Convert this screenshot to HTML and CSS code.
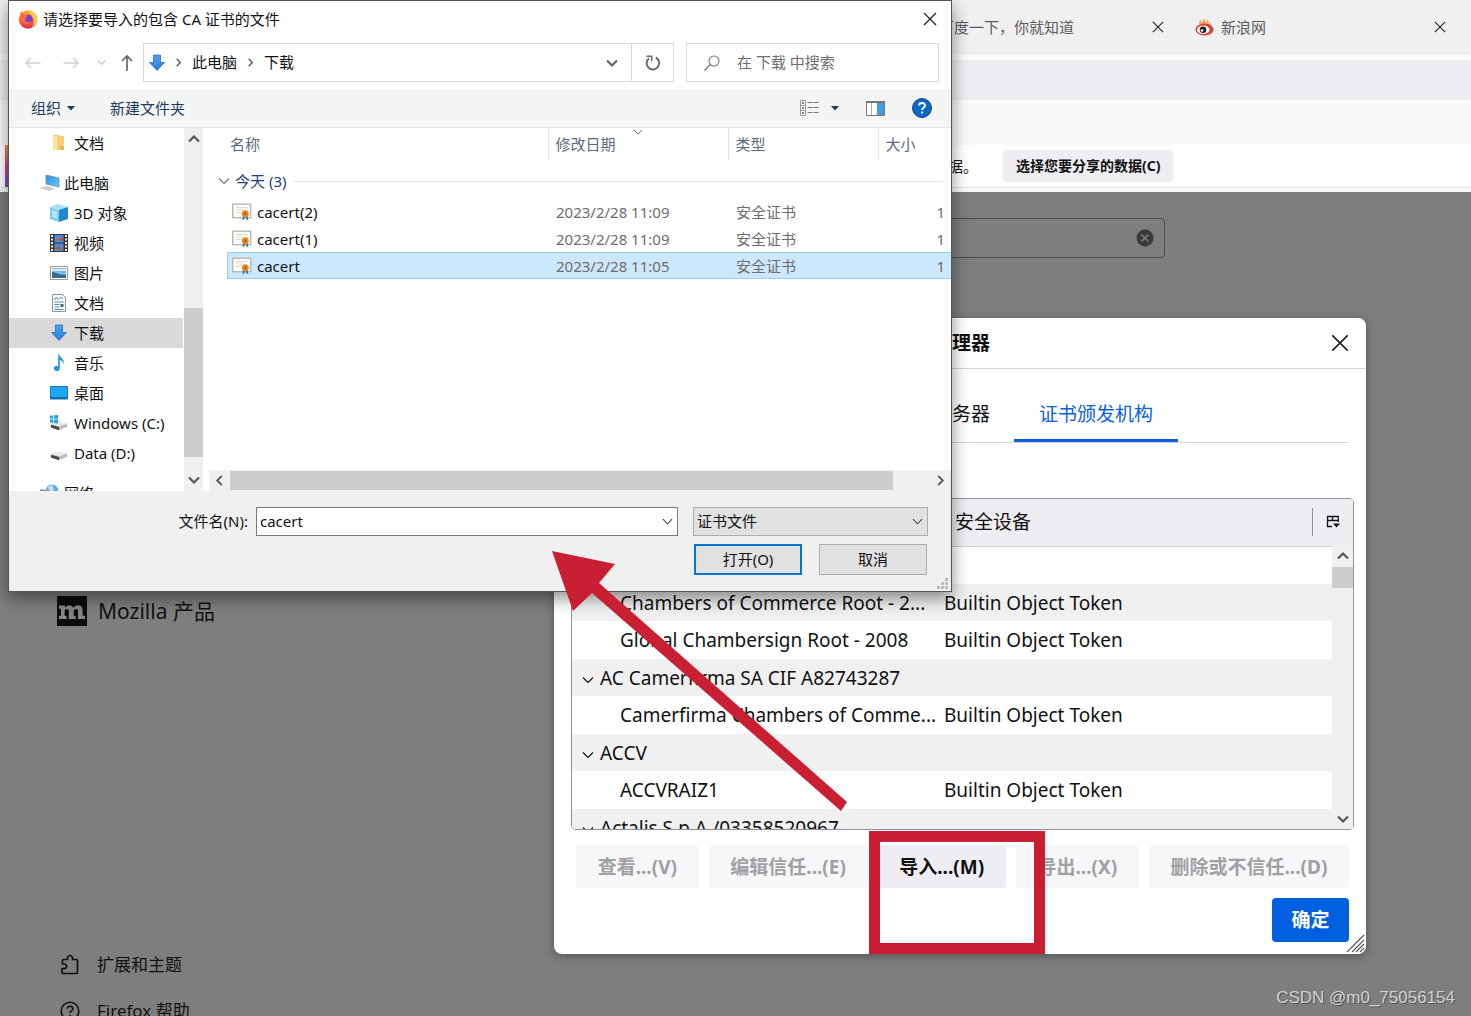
FILE: index.html
```html
<!DOCTYPE html>
<html lang="zh-CN">
<head>
<meta charset="utf-8">
<title>证书管理器</title>
<link rel="stylesheet" href="styles.css">
</head>
<body>
<svg class="sprite" aria-hidden="true">
  <defs>
    <linearGradient id="g-arrow" x1="0" y1="0" x2="0" y2="1"><stop offset="0" stop-color="#4aa3ee"/><stop offset="1" stop-color="#2b7fd6"/></linearGradient>
    <linearGradient id="g-fox" x1="0" y1="0" x2="0" y2="1"><stop offset="0" stop-color="#ffb02e"/><stop offset=".45" stop-color="#ff7139"/><stop offset="1" stop-color="#e02950"/></linearGradient>
    <linearGradient id="g-screen" x1="0" y1="0" x2="1" y2="1"><stop offset="0" stop-color="#2b8fe0"/><stop offset="1" stop-color="#6cc7fb"/></linearGradient>
  </defs>
  <symbol id="close" viewBox="0 0 14 14"><path d="M1 1l12 12M13 1L1 13" fill="none" stroke="currentColor" stroke-width="1.3"/></symbol>
  <symbol id="down" viewBox="0 0 12 12"><path d="M1 3.5l5 5 5-5" fill="none" stroke="currentColor" stroke-width="1.2"/></symbol>
  <symbol id="down-bold" viewBox="0 0 12 12"><path d="M1 3.5l5 5 5-5" fill="none" stroke="currentColor" stroke-width="2.2"/></symbol>
  <symbol id="up-bold" viewBox="0 0 12 12"><path d="M1 8.5l5-5 5 5" fill="none" stroke="currentColor" stroke-width="2.2"/></symbol>
  <symbol id="left-bold" viewBox="0 0 12 12"><path d="M8.500 1l-5 5 5 5" fill="none" stroke="currentColor" stroke-width="2"/></symbol>
  <symbol id="right-bold" viewBox="0 0 12 12"><path d="M3.500 1l5 5-5 5" fill="none" stroke="currentColor" stroke-width="2"/></symbol>
  <symbol id="caret" viewBox="0 0 8 5"><path d="M0 0h8L4 4.500z" fill="currentColor"/></symbol>
  <symbol id="download" viewBox="0 0 18 18"><path d="M5.500 1h7v7.500h4L9 16.500 1.500 8.500h4z" fill="url(#g-arrow)" stroke="#2a6cb4" stroke-width=".8"/></symbol>
  <symbol id="cert" viewBox="0 0 20 18"><rect x=".7" y="1.200" width="18" height="13.500" fill="#fcfbf7" stroke="#b9b7b1" stroke-width="1.400"/><path d="M4 4.500h11M5 7h6M4 9.500h5" stroke="#ddd9cd" fill="none"/><path d="M11 12l-.5 5.500 2-1.500.7-3zM15.500 12l.8 5.500-2.200-1.500-.6-3z" fill="#2f76b5"/><circle cx="13.300" cy="10.800" r="3.500" fill="#e58a1c"/><circle cx="13.300" cy="10.800" r="1.200" fill="#a45c0c"/></symbol>
  <symbol id="drive" viewBox="0 0 20 18"><path d="M1 10.500l8-3 10 2.200v3.500L10 17 1 14z" fill="#b9bdc0"/><path d="M1 10.500l8-3 10 2.200-9 3.300z" fill="#e9ebec"/><path d="M1 11l9 2.500V17l-9-3z" fill="#45484a"/></symbol>
</svg>

<div class="desktop">
  <div class="browser">
    <div class="tabstrip">
      <div class="tab"><span class="favicon"></span><span class="tab-title">百度一下，你就知道</span>
        <button class="icon-button" aria-label="关闭标签页"><svg width="12" height="12"><use href="#close"/></svg></button></div>
      <div class="tab"><span class="favicon"><svg width="19" height="18" viewBox="0 0 19 18"><path d="M4 6c0-2 1-3 1-5 1 2 1.500 2.500 1.500 4C7.500 4 8.500 2 8.500.5 10 2 10.500 3 10 5c1.500-1 2.500-2.500 2.500-4C14 3 14 4.500 13 6c1.500-.5 2-1 3-2-.2 2-1 3-2 4z" fill="#f2a65a"/><ellipse cx="9.500" cy="11.500" rx="9" ry="6" fill="#df3a34"/><ellipse cx="8.300" cy="11.700" rx="6.300" ry="4.300" fill="#fff"/><circle cx="8" cy="11.800" r="3.300" fill="#222"/><circle cx="7" cy="12.500" r="1.300" fill="#fff"/></svg></span><span class="tab-title">新浪网</span>
        <button class="icon-button" aria-label="关闭标签页"><svg width="12" height="12"><use href="#close"/></svg></button></div>
    </div>
    <div class="urlbar"></div>
    <div class="bookmarks"></div>
    <div class="notice">
      <span class="notice-logo"></span>
      <span class="notice-text">数据。</span>
      <button class="notice-button">选择您要分享的数据(C)</button>
    </div>
    <main class="page">
      <div class="search"><input class="search-input" type="text" aria-label="搜索设置">
        <button class="icon-button" aria-label="清除"><svg width="18" height="18" viewBox="0 0 18 18"><circle cx="9" cy="9" r="8.500" fill="#3a3a3b"/><path d="M5.500 5.500l7 7M12.500 5.500l-7 7" stroke="#7e7e7e" stroke-width="1.600"/></svg></button></div>
      <a class="mozilla" href="#"><svg width="30" height="30" viewBox="0 0 30 30"><rect width="30" height="30" fill="#0b0b0e"/><path d="M2 9.500h6v2.300c1-1.700 2.500-2.600 4.300-2.600 2 0 3.400 1 4 2.800 1-1.800 2.600-2.800 4.700-2.800 3 0 4.600 1.800 4.600 5v5.600H28V23h-7v-7.600c0-1.700-.6-2.500-1.900-2.500-1.500 0-2.400 1.200-2.400 3v3.900h2V23h-6.900v-7.600c0-1.700-.6-2.500-1.900-2.500-1.500 0-2.300 1.200-2.300 3v3.900h2V23H2v-3.200h2v-7H2z" fill="#858585"/></svg>Mozilla 产品</a>
      <nav class="links">
        <a href="#"><svg width="20" height="22" viewBox="0 0 20 22"><path d="M3 19.500h13.500a1 1 0 0 0 1-1V6.500a1 1 0 0 0-1-1h-4V4a2.500 2.500 0 0 0-5 0v1.500h-4a1 1 0 0 0-1 1V10h1.700a2.300 2.300 0 0 1 0 4.600H2v4a1 1 0 0 0 1 .9z" fill="none" stroke="currentColor" stroke-width="1.700"/></svg>扩展和主题</a>
        <a href="#"><svg width="20" height="20" viewBox="0 0 20 20"><circle cx="10" cy="10" r="8.800" fill="none" stroke="currentColor" stroke-width="1.600"/><path d="M7.300 7.700c.2-3.300 5.600-3.200 5.500.1 0 2-2.700 2.100-2.700 4.200M10 13.700v1.600" fill="none" stroke="currentColor" stroke-width="1.700"/></svg>Firefox 帮助</a>
      </nav>
    </main>
  </div>

  <section class="manager" aria-label="证书管理器">
    <header class="manager-head"><h1>证书管理器</h1>
      <button class="icon-button" aria-label="关闭"><svg width="18" height="18"><use href="#close"/></svg></button></header>
    <div class="manager-tabs">
      <button class="mtab">服务器</button>
      <button class="mtab active">证书颁发机构</button>
    </div>
    <div class="tree">
      <table>
        <colgroup><col class="c-name"><col><col class="c-pick"></colgroup>
        <thead><tr><th></th><th>安全设备</th><th><button class="picker" aria-label="选择列"><svg width="14" height="14" viewBox="0 0 14 14"><path d="M1 1.500h11.500M1 5.500h11.500M1.500 1v10.500H6M6.500 1.500v4M12.300 1v6" fill="none" stroke="#15141a" stroke-width="1.300"/><path d="M7 8.500h7l-3.500 4z" fill="#15141a"/></svg></button></th></tr></thead>
        <tbody>
          <tr><td></td><td colspan="2"></td></tr>
          <tr><td class="child">Chambers of Commerce Root - 2...</td><td colspan="2">Builtin Object Token</td></tr>
          <tr><td class="child">Global Chambersign Root - 2008</td><td colspan="2">Builtin Object Token</td></tr>
          <tr><td colspan="3" class="parent"><svg width="12" height="12"><use href="#down"/></svg>AC Camerfirma SA CIF A82743287</td></tr>
          <tr><td class="child">Camerfirma Chambers of Comme...</td><td colspan="2">Builtin Object Token</td></tr>
          <tr><td colspan="3" class="parent"><svg width="12" height="12"><use href="#down"/></svg>ACCV</td></tr>
          <tr><td class="child">ACCVRAIZ1</td><td colspan="2">Builtin Object Token</td></tr>
          <tr><td colspan="3" class="parent"><svg width="12" height="12"><use href="#down"/></svg>Actalis S.p.A./03358520967</td></tr>
        </tbody>
      </table>
      <div class="tree-scroll"><svg width="12" height="12"><use href="#up-bold"/></svg><span class="thumb"></span><svg class="end" width="12" height="12"><use href="#down-bold"/></svg></div>
    </div>
    <div class="actions">
      <button disabled>查看...(V)</button>
      <button disabled>编辑信任...(E)</button>
      <button>导入...(M)</button>
      <button disabled>导出...(X)</button>
      <button disabled>删除或不信任...(D)</button>
    </div>
    <div class="confirm"><button>确定</button></div>
    <svg class="resizer" width="20" height="20" viewBox="0 0 20 20"><path d="M1 18L18 1M6 18L18 6M10 18l8-8M14 18l4-4" stroke="#555" stroke-width="1.100"/></svg>
  </section>

  <section class="filedlg" aria-label="打开文件">
    <header class="titlebar">
      <svg width="20" height="20" viewBox="0 0 20 20"><circle cx="10" cy="10.500" r="9.200" fill="url(#g-fox)"/><path d="M11 1c3 1 8 4 8.200 10-1 4-3 6-5 7 3-5 2-9-1-12-1.500-1.500-2.500-3-2.200-5z" fill="#ffcb3d"/><circle cx="10" cy="10.300" r="4.700" fill="#7a43c6"/><path d="M3 2l3 4 4 .5-2 2-1 3c2 2 5 2 7 0-1 4-7 5-10 1-2-3-2-6-1-10.500z" fill="#ff6a36"/></svg>
      <h2>请选择要导入的包含 CA 证书的文件</h2>
      <button class="icon-button" aria-label="关闭"><svg width="14" height="14"><use href="#close"/></svg></button>
    </header>
    <div class="navrow">
      <div class="navbtns">
        <button class="icon-button faint" aria-label="后退"><svg width="16" height="12" viewBox="0 0 16 12"><path d="M6 1L1 6l5 5M1 6h14.500" fill="none" stroke="currentColor" stroke-width="1.500"/></svg></button>
        <button class="icon-button faint" aria-label="前进"><svg width="16" height="12" viewBox="0 0 16 12"><path d="M10 1l5 5-5 5M15 6H.5" fill="none" stroke="currentColor" stroke-width="1.500"/></svg></button>
        <button class="icon-button faint recent" aria-label="最近位置"><svg width="9" height="9"><use href="#down-bold"/></svg></button>
        <button class="icon-button" aria-label="上移"><svg width="12" height="16" viewBox="0 0 12 16"><path d="M1 6l5-5 5 5M6 1v15" fill="none" stroke="#666" stroke-width="1.700"/></svg></button>
      </div>
      <div class="address">
        <svg width="18" height="18"><use href="#download"/></svg>
        <svg width="9" height="9"><use href="#right-bold"/></svg><span>此电脑</span>
        <svg width="9" height="9"><use href="#right-bold"/></svg><span>下载</span>
        <button class="icon-button drop" aria-label="历史"><svg width="12" height="12"><use href="#down-bold"/></svg></button>
        <button class="refresh" aria-label="刷新"><svg width="16" height="16" viewBox="0 0 16 16"><path d="M10.800 2.500A6.300 6.300 0 1 1 4 3.200" fill="none" stroke="#6d6d6d" stroke-width="2"/><path d="M1.500 1.200h5.200v5" fill="none" stroke="#6d6d6d" stroke-width="1.600"/></svg></button>
      </div>
      <label class="find"><svg width="16" height="16" viewBox="0 0 16 16"><circle cx="10" cy="6" r="5" fill="none" stroke="#777" stroke-width="1.100"/><path d="M6.300 9.500L.5 15.500" stroke="#777" stroke-width="1.200"/></svg><input type="text" placeholder="在 下载 中搜索" aria-label="搜索"></label>
    </div>
    <div class="toolbar">
      <button>组织<svg width="8" height="5"><use href="#caret"/></svg></button>
      <button>新建文件夹</button>
      <button class="view" aria-label="更改视图"><svg width="19" height="16" viewBox="0 0 19 16"><path d="M.5.500h5v15h-5zM.5 5.500h5M.5 10.500h5" fill="#fff" stroke="#999"/><path d="M2 3h2M2 8h2M2 13h2" stroke="#744" stroke-width="1.600"/><path d="M7.500 2.500h11M7.500 7.500h11M7.500 12.500h11" stroke="#777" stroke-dasharray="5 1"/></svg><svg width="8" height="5"><use href="#caret"/></svg></button>
      <button aria-label="预览窗格"><svg width="19" height="15" viewBox="0 0 19 15"><path d="M.5.500h18v14H.500z" fill="#fff" stroke="#777"/><path d="M0 1h19" stroke="#777" stroke-width="2"/><path d="M5.500 2v12" stroke="#aaa"/><path d="M11 2h7v12h-7z" fill="#429be8"/></svg></button>
      <button aria-label="帮助"><svg width="20" height="20" viewBox="0 0 20 20"><circle cx="10" cy="10" r="9.500" fill="#0b68c6" stroke="#17457c"/><path d="M7 7.500c.2-3.500 6.200-3.400 6 .2-.1 2-2.900 2.200-2.900 4.300M10.100 13.500v2" fill="none" stroke="#fff" stroke-width="1.900"/></svg></button>
    </div>
    <div class="panes">
      <nav class="side">
        <a href="#" class="gap"><svg width="18" height="18" viewBox="0 0 18 18"><path d="M3 1h6l1 1h4v14H3z" fill="#f5cf71"/><path d="M3 1l4 2v14l-4-1z" fill="#fbe6a9"/><path d="M10 12h4v4h-4z" fill="#e9b949"/></svg>文档</a>
        <a href="#" class="top"><svg width="20" height="18" viewBox="0 0 20 18"><path d="M6 1l13 3v9L6 10z" fill="url(#g-screen)" stroke="#6f8ea8" stroke-width=".8"/><path d="M0 14l7-2 8 2.500-6 2.500z" fill="#c9ccd0"/></svg>此电脑</a>
        <a href="#"><svg width="18" height="18" viewBox="0 0 18 18"><path d="M0 3l8-3 10 3-8 3z" fill="#a6e1f7"/><path d="M0 3l9 3v12l-9-3z" fill="#7ccdf0"/><path d="M9 6l9-3v12l-9 3z" fill="#1f86cf"/><path d="M2 6l5 1.500v7L2 13z" fill="#b4e6f8"/></svg>3D 对象</a>
        <a href="#"><svg width="18" height="18" viewBox="0 0 18 18"><path d="M0 0h18v18H0z" fill="#333"/><path d="M4.500 1h9v7.500h-9zM4.500 9.500h9V17h-9z" fill="#4a8ddd"/><path d="M5 6l8-3v4zM5 15l4-3 4 4z" fill="#c0512f"/><path d="M2 1v17M16 1v17" stroke="#eee" stroke-width="2" stroke-dasharray="2 1.500"/></svg>视频</a>
        <a href="#"><svg width="18" height="18" viewBox="0 0 18 18"><path d="M.5 2.500h17v13H.500z" fill="#fff" stroke="#999"/><path d="M2 4h14v10H2z" fill="#7db9e8"/><path d="M2 8c4 0 6 3 14 3v3H2z" fill="#35688c"/><path d="M2 5h14v2H2z" fill="#d6ecfa"/></svg>图片</a>
        <a href="#"><svg width="18" height="18" viewBox="0 0 18 18"><path d="M2.500.500h10l3 3v14h-13z" fill="#fff" stroke="#8b9499"/><path d="M4.500 6l2-3 2 3M9 4h4M4.500 8h9M4.500 10.500h5M4.500 13h5M4.500 15.500h9" stroke="#3d95b8" fill="none"/><path d="M10.500 10h3v3h-3z" fill="#4a6577"/></svg>文档</a>
        <a href="#" class="current"><svg width="18" height="18"><use href="#download"/></svg>下载</a>
        <a href="#"><svg width="18" height="18" viewBox="0 0 18 18"><path d="M9 0c.5 4 6 4 4.500 10-.5-2.500-2-3.500-3.700-4v8.500a3 2.600 0 1 1-1.600-2.300V0z" fill="#1b9be0"/></svg>音乐</a>
        <a href="#"><svg width="18" height="18" viewBox="0 0 18 18"><path d="M.5 2.500h17v12.500H.500z" fill="#1fa5f4" stroke="#1578b8"/><path d="M1 14h16" stroke="#0b5f9e" stroke-width="1.500"/></svg>桌面</a>
        <a href="#"><svg width="20" height="18" viewBox="0 0 20 18"><use href="#drive"/><path d="M0 1l3.500-.5v3.700H0zM4.500.400L9 0v4.200H4.500zM0 5.200h3.500V9L0 8.500zM4.500 5.200H9v4.300l-4.500-.4z" fill="#27a4e0"/></svg>Windows (C:)</a>
        <a href="#" class="gap"><svg width="20" height="18"><use href="#drive"/></svg>Data (D:)</a>
        <a href="#" class="top"><svg width="20" height="18" viewBox="0 0 20 18"><circle cx="12" cy="7" r="6.500" fill="#62aede"/><path d="M8 3l4-2 2 5-4 2z" fill="#c4e4f6"/><path d="M0 5l6 1v8H0z" fill="#6d9cbb"/></svg>网络</a>
      </nav>
      <div class="vscroll"><svg width="12" height="12"><use href="#up-bold"/></svg><span class="thumb"></span><svg width="12" height="12"><use href="#down-bold"/></svg></div>
      <div class="files">
        <svg class="sort" width="10" height="10"><use href="#down"/></svg>
        <table>
          <colgroup><col class="f-pad"><col><col class="f-date"><col class="f-type"><col class="f-size"></colgroup>
          <thead><tr><th></th><th>名称</th><th>修改日期</th><th>类型</th><th>大小</th></tr></thead>
          <tbody>
            <tr class="group"><td colspan="5"><div><svg width="12" height="12"><use href="#down"/></svg>今天 (3)<i></i></div></td></tr>
            <tr><td></td><td class="name"><svg width="20" height="18"><use href="#cert"/></svg>cacert(2)</td><td>2023/2/28 11:09</td><td>安全证书</td><td class="num">1</td></tr>
            <tr><td></td><td class="name"><svg width="20" height="18"><use href="#cert"/></svg>cacert(1)</td><td>2023/2/28 11:09</td><td>安全证书</td><td class="num">1</td></tr>
            <tr class="selected"><td></td><td class="name"><svg width="20" height="18"><use href="#cert"/></svg>cacert</td><td>2023/2/28 11:05</td><td>安全证书</td><td class="num">1</td></tr>
          </tbody>
        </table>
        <div class="hscroll"><svg width="11" height="11"><use href="#left-bold"/></svg><span class="thumb"></span><svg width="11" height="11"><use href="#right-bold"/></svg></div>
      </div>
    </div>
    <footer class="dlg-foot">
      <label for="fname">文件名(N):</label>
      <div class="combo"><input id="fname" type="text" value="cacert"><svg width="11" height="11"><use href="#down"/></svg></div>
      <div class="combo type"><select aria-label="文件类型"><option>证书文件</option></select><svg width="11" height="11"><use href="#down"/></svg></div>
      <div class="dlg-buttons"><button class="default">打开(O)</button><button>取消</button></div>
      <svg class="grip" width="12" height="12" viewBox="0 0 12 12"><path d="M8 0h3v3H8zM8 4h3v3H8zM8 8h3v3H8zM4 4h3v3H4zM4 8h3v3H4zM0 8h3v3H0z" fill="#bbb"/></svg>
    </footer>
  </section>

  <svg class="arrow" width="296" height="262" viewBox="0 0 296 262"><path d="M0 0l63 13-16 19 248 219-6 9L40 42 21 60z" fill="#c81f33"/></svg>
  <div class="highlight"></div>
  <div class="watermark">CSDN @m0_75056154</div>
</div>
</body>
</html>
```
FILE: styles.css
```css
* { box-sizing: border-box; }
body, h1, h2 { margin: 0; }
body, button, input, select {
  font-family: "Noto Sans", "Noto Sans CJK SC", sans-serif;
  font-size: 15px;
  line-height: 20px;
  color: #111;
}
button { border: 0; padding: 0; background: none; white-space: nowrap; }
a { color: inherit; text-decoration: none; }
svg { flex: none; display: block; }
table { width: 100%; border-collapse: collapse; table-layout: fixed; }
th, td { padding: 0; text-align: left; font-weight: 400; white-space: nowrap; }
.sprite { position: absolute; width: 0; height: 0; }
.icon-button { display: flex; align-items: center; justify-content: center; color: #222; }
.desktop { position: relative; height: 100vh; overflow: hidden; }

/* browser behind the dialogs */
.browser { display: flex; flex-direction: column; height: 100%; background: #f9f9fb; }
.tabstrip { display: flex; justify-content: flex-end; height: 55px; padding-right: 11px; background: #f0f0f0; }
.tab { display: flex; align-items: center; width: 282px; padding: 0 14px 1px 17px; gap: 7px; }
.favicon { width: 19px; }
.tab-title { flex: 1; color: #5b5b5f; }
.urlbar { height: 40px; margin-top: 5px; background: #eeeef2; }
.bookmarks { height: 45px; }
.notice { display: flex; align-items: center; height: 43px; padding-left: 5px; background: #fff; border-bottom: 1px solid #e6e6ea; }
.notice-logo { width: 42px; height: 42px; background: linear-gradient(#e8963a, #c0468a 50%, #7b4bd8); }
.notice-text { width: 931px; text-align: right; }
.notice-button { margin-left: 25px; height: 32px; padding: 0 13px; border-radius: 4px; background: #eeeef2; font-size: 14px; font-weight: 700; }
.page { flex: 1; min-height: 0; display: flex; flex-direction: column; margin-top: 4px; padding: 26px 306px 0 57px; background: #7e7e7e; }
.search { display: flex; align-items: center; align-self: flex-end; width: 500px; height: 40px; padding-right: 10px; border: 1px solid #4b4b4c; border-radius: 4px; }
.search-input { flex: 1; border: 0; background: none; }
.mozilla { display: flex; align-items: center; gap: 11px; height: 30px; margin-top: 338px; font-size: 21px; line-height: 30px; }
.links { display: flex; flex-direction: column; margin: auto 0 -18px 3px; font-size: 17px; line-height: 46px; }
.links a { display: flex; align-items: center; gap: 17px; }

/* certificate manager */
.manager { position: absolute; left: 554px; top: 318px; width: 812px; height: 636px; border-radius: 8px; background: #fff; box-shadow: 0 2px 10px rgba(0, 0, 0, .35); display: flex; flex-direction: column; }
.manager-head { display: flex; align-items: center; height: 51px; padding: 0 17px 0 341px; border-bottom: 1px solid #d4d4d8; }
.manager-head h1 { flex: 1; font-size: 19px; line-height: 28px; }
.manager-tabs { display: flex; justify-content: flex-end; height: 74px; margin: 0 17px 55px; padding-right: 171px; border-bottom: 1px solid #d4d4d8; }
.mtab { padding: 20px 24px 0 25px; font-size: 19px; line-height: 28px; border-bottom: 3px solid transparent; }
.mtab.active { padding-right: 25px; color: #0a60df; border-color: #0a60df; }
.tree { position: relative; height: 332px; margin: 0 12px 0 17px; overflow: hidden; border: 1px solid #8f8f9d; border-radius: 5px; font-size: 19px; line-height: 28px; }
.tree col.c-name { width: 372px; }
.tree col.c-pick { width: 41px; }
.tree thead tr { height: 47px; background: #eeeef2; border-bottom: 1px solid #d0d0d4; }
.tree thead th:nth-child(2) { padding-left: 11px; }
.picker { display: flex; align-items: center; justify-content: center; width: 41px; height: 28px; border-left: 1px solid #8f8f9d; }
.tree tbody tr { height: 38px; }
.tree tbody tr:nth-child(even) { height: 37px; background: #f0f0f1; }
.tree td.child { padding-left: 48px; }
.tree td.parent svg { display: inline-block; vertical-align: -1px; margin: 0 6px 0 10px; }
.tree-scroll { position: absolute; right: 0; top: 47px; bottom: 0; width: 21px; display: flex; flex-direction: column; align-items: center; padding: 4px 0; background: #f0f0f0; color: #555; }
.tree-scroll .thumb { width: 21px; height: 21px; margin-top: 5px; background: #cdcdcd; }
.tree-scroll .end { margin-top: auto; }
.actions { display: flex; gap: 10px; margin: 15px 17px 0 22px; }
.actions button { flex: 1 1 auto; height: 43px; border-radius: 4px; background: #eeeef2; font-size: 19px; font-weight: 700; }
.actions button:disabled { background: #f7f7f9; color: #a0a0a3; }
.confirm { display: flex; justify-content: flex-end; margin: 10px 17px 0; }
.confirm button { width: 77px; height: 44px; border-radius: 4px; background: #0060df; color: #fff; font-size: 19px; font-weight: 700; }
.resizer { position: absolute; right: 0; bottom: 0; }

/* file chooser */
.filedlg { position: absolute; left: 8px; top: 0; width: 944px; height: 592px; display: flex; flex-direction: column; border: 1px solid #555; background: #fff; box-shadow: 0 6px 16px rgba(0, 0, 0, .45); }
.titlebar { display: flex; align-items: center; height: 36px; padding: 0 14px 0 9px; }
.titlebar h2 { flex: 1; padding-left: 5px; font-size: 15px; font-weight: 400; }
.navrow { display: flex; height: 52px; padding: 6px 12px 7px 0; }
.navbtns { display: flex; align-items: center; width: 134px; padding-left: 16px; gap: 22px; }
.navbtns .recent { margin: 0 -7px 0 -4px; }
.faint { color: #d2d2d2; }
.address { flex: 1; display: flex; align-items: center; gap: 8px; padding-left: 4px; border: 1px solid #d9d9d9; color: #666; }
.address span { padding: 0 1px 2px; color: #111; }
.drop { margin-left: auto; margin-right: 5px; color: #666; }
.refresh { display: flex; align-items: center; justify-content: center; width: 42px; height: 100%; border-left: 1px solid #d9d9d9; }
.find { display: flex; align-items: center; width: 253px; margin-left: 12px; padding-left: 17px; gap: 15px; border: 1px solid #d9d9d9; }
.find input { flex: 1; min-width: 0; padding: 0 2px 2px; border: 0; background: none; }
.find input::placeholder { color: #6d6d6d; opacity: 1; }
.toolbar { display: flex; align-items: center; height: 39px; padding: 0 19px 0 22px; background: #f4f6f6; border-bottom: 1px solid #dfe4e4; }
.toolbar button { display: flex; align-items: center; gap: 6px; margin-right: 27px; color: #1e395b; }
.toolbar button:nth-child(2) { margin-left: 8px; }
.toolbar .view { margin-left: auto; gap: 12px; }
.toolbar button:last-child { margin-right: 0; }
.panes { flex: 1; min-height: 0; display: flex; }
.side { width: 174px; margin-right: 1px; overflow: hidden; }
.side a { display: flex; align-items: center; height: 30px; padding-left: 41px; gap: 6px; white-space: nowrap; }
.side a svg { width: 18px; }
.side a.top { padding-left: 31px; gap: 4px; }
.side a.top svg { width: 20px; }
.side a.gap { margin-bottom: 10px; }
.side a.current { background: #d9d9d9; }
.vscroll { display: flex; flex-direction: column; align-items: center; width: 19px; margin-right: 1px; padding: 5px 0; background: #f0f0f0; color: #555; }
.vscroll .thumb { width: 19px; height: 149px; margin: auto 0 17px; background: #cdcdcd; }
.files { position: relative; flex: 1; min-width: 0; display: flex; flex-direction: column; }
.sort { position: absolute; left: 429px; top: -1px; color: #666; }
.f-pad { width: 23px; }
.f-date { width: 180px; }
.f-type { width: 150px; }
.f-size { width: 73px; }
.files th { height: 32px; padding-left: 7px; border-left: 1px solid #e3e6e8; color: #5a6a7c; }
.files th:nth-child(-n+2) { padding-left: 3px; border: 0; }
.files tbody tr { height: 27px; }
.files td { padding-left: 8px; color: #6d6d6d; }
.files td.name { padding-left: 5px; color: #111; }
.files td.name svg { display: inline-block; vertical-align: -3px; margin-right: 5px; }
.files td.num { padding: 0 6px 0 0; text-align: right; }
.files tbody tr.group { height: 38px; }
.files .group td { padding: 4px 8px 0 14px; color: #1e3f7a; }
.group div { display: flex; align-items: center; gap: 5px; }
.group svg { color: #777; }
.group i { flex: 1; height: 1px; margin-left: 3px; background: #dfe3e6; }
.files .selected td:not(:first-child) { background: #cce8ff; box-shadow: inset 0 1px #99cdf0, inset 0 -1px #99cdf0; }
.files .selected td.name { box-shadow: inset 1px 0 #99cdf0, inset 0 1px #99cdf0, inset 0 -1px #99cdf0; }
.hscroll { display: flex; align-items: center; height: 21px; margin: auto 0 0 5px; padding: 0 5px; background: #f0f0f0; color: #555; }
.hscroll .thumb { width: 663px; height: 19px; margin: 0 auto 0 5px; background: #cdcdcd; }
.dlg-foot { position: relative; display: grid; grid-template-columns: 1fr 422px 235px; grid-template-rows: 29px 31px; column-gap: 15px; row-gap: 8px; height: 100px; padding: 16px 23px 0 0; background: #f0f0f0; }
.dlg-foot label { align-self: center; justify-self: end; margin-right: -7px; padding-bottom: 2px; }
.dlg-foot .combo { display: flex; align-items: center; padding-right: 4px; border: 1px solid #7a7a7a; background: #fff; }
.combo input, .combo select { flex: 1; min-width: 0; padding: 0 3px 2px; border: 0; background: none; appearance: none; }
.combo svg { color: #444; }
.dlg-foot .type { background: #e1e1e1; border-color: #adadad; }
.dlg-buttons { grid-column: 3; display: flex; justify-content: space-between; padding: 0 1px; }
.dlg-buttons button { width: 108px; padding-bottom: 2px; border: 1px solid #adadad; background: #e1e1e1; }
.dlg-buttons .default { border: 2px solid #0078d7; }
.grip { position: absolute; right: 2px; bottom: 1px; }

/* annotations */
.arrow { position: absolute; left: 552px; top: 551px; }
.highlight { position: absolute; left: 869px; top: 831px; width: 176px; height: 123px; border: 11px solid #c81f33; }
.watermark { position: absolute; right: 16px; bottom: 8px; font: 17px/20px "Liberation Sans", sans-serif; color: #d0d0d0; text-shadow: 1px 1px #555; }
```
